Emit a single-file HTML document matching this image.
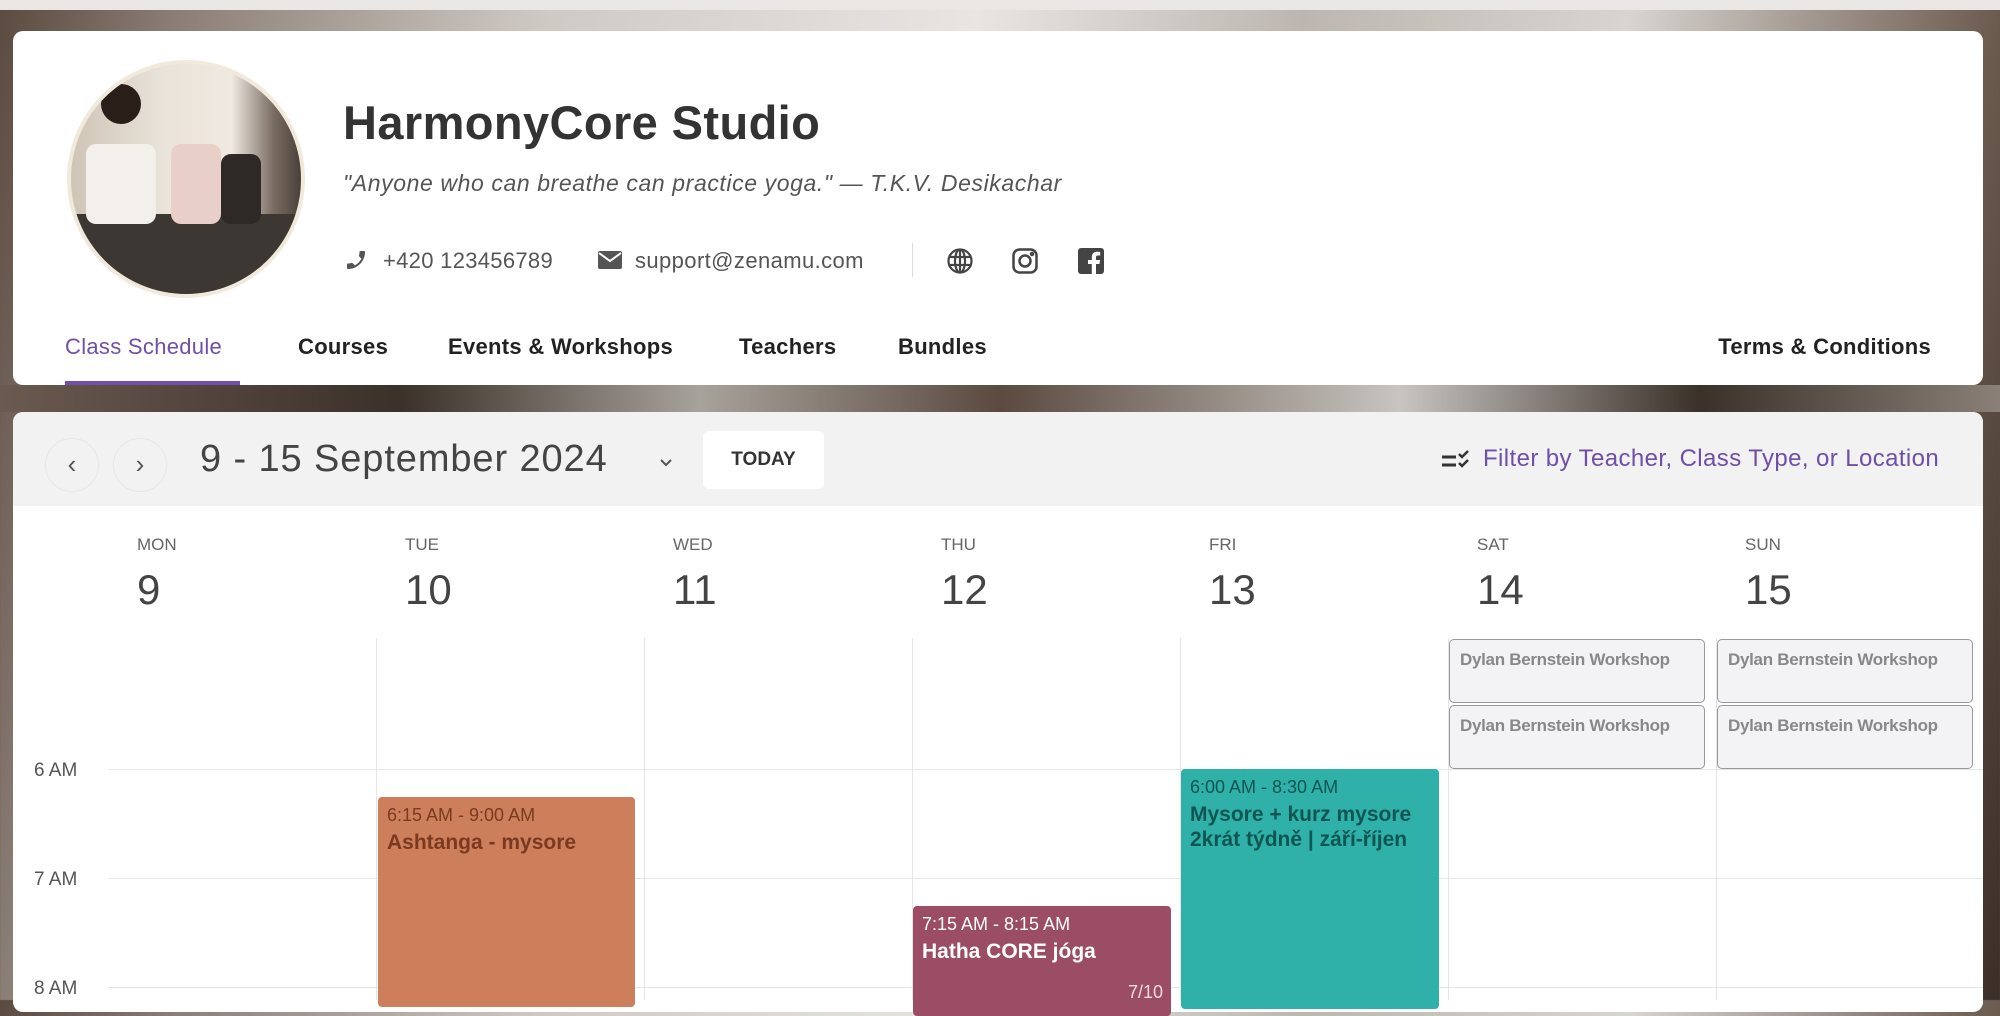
<!DOCTYPE html>
<html><head><meta charset="utf-8"><style>
*{box-sizing:border-box;margin:0;padding:0}
body{width:2000px;height:1000px;overflow:hidden;font-family:"Liberation Sans",sans-serif;position:relative;
background:linear-gradient(100deg,#5a4a40 0%,#8a7d74 8%,#cfc9c4 25%,#e8e5e2 45%,#bdb6b0 60%,#d8d4d0 75%,#6b5a4e 92%,#3a2e28 100%);}
.abs{position:absolute}
.card{position:absolute;background:#fff;border-radius:10px}
.nav{position:absolute;top:303px;font-size:22px;color:#222;font-weight:bold;letter-spacing:0.3px}
.dn{position:absolute;top:535px;font-size:17px;color:#666}
.dd{position:absolute;top:566px;font-size:42px;color:#444}
.vl{position:absolute;top:638px;width:1px;height:362px;background:#e6e6e6}
.hl{position:absolute;left:108px;width:1875px;height:1px;background:#e6e6e6}
.hr{position:absolute;left:34px;font-size:19px;color:#555}
.ws{position:absolute;width:256px;height:64px;background:#f3f3f6;border:1.5px solid #999;border-radius:5px;font-size:17px;font-weight:bold;color:#888;padding:10px 10px;white-space:nowrap;letter-spacing:-0.3px}
.ev{position:absolute;border-radius:4px;padding:8px 9px}
.ev .t{font-size:18px}
.ev .n{font-size:21px;font-weight:bold;margin-top:4px;line-height:25px}
</style></head><body>
<div class="abs" style="left:0;top:0;width:2000px;height:10px;background:#e9e6e3"></div>
<div class="abs" style="left:0;top:385px;width:2000px;height:27px;background:linear-gradient(90deg,#6a5a50,#3b302a 20%,#a8a29c 35%,#5a4a40 50%,#c8c4c0 70%,#3b302a 85%,#8a8078)"></div>

<div class="card" style="left:13px;top:31px;width:1970px;height:354px;overflow:hidden">
 <div class="abs" style="left:54px;top:29px;width:238px;height:238px;border-radius:50%;border:4px solid #f1e9dc;overflow:hidden;background:linear-gradient(90deg,#cfc5b6 0%,#e9e3da 40%,#efe9e1 70%,#7a6c62 88%,#4a403a 100%)">
  <div class="abs" style="left:0;top:150px;width:238px;height:90px;background:#3d3734"></div>
  <div class="abs" style="left:30px;top:20px;width:40px;height:40px;border-radius:50%;background:#2a1e18"></div>
  <div class="abs" style="left:15px;top:80px;width:70px;height:80px;border-radius:10px;background:#f3f0ec"></div>
  <div class="abs" style="left:100px;top:80px;width:50px;height:80px;border-radius:10px;background:#e8cfc8"></div>
  <div class="abs" style="left:150px;top:90px;width:40px;height:70px;border-radius:10px;background:#2e2826"></div>
 </div>
 <div class="abs" style="left:330px;top:64px;font-size:47px;font-weight:bold;color:#333;letter-spacing:0.4px">HarmonyCore Studio</div>
 <div class="abs" style="left:330px;top:139px;font-size:23px;font-style:italic;color:#555;letter-spacing:0.6px">"Anyone who can breathe can practice yoga." — T.K.V. Desikachar</div>
 <svg class="abs" style="left:331px;top:217px" width="24" height="24" viewBox="0 0 24 24"><path d="M20 15.5c-1.2 0-2.4-.2-3.6-.6-.3-.1-.7 0-1 .2l-2.2 2.2c-2.8-1.4-5.1-3.8-6.6-6.6l2.2-2.2c.3-.3.4-.7.2-1-.3-1.1-.5-2.3-.5-3.5 0-.6-.4-1-1-1H4c-.6 0-1 .4-1 1 0 9.4 7.6 17 17 17 .6 0 1-.4 1-1v-3.5c0-.6-.4-1-1-1z" fill="#555" transform="scale(-1,1) translate(-24,0)"/></svg>
 <div class="abs" style="left:370px;top:217px;font-size:22px;color:#555;letter-spacing:0.3px">+420 123456789</div>
 <svg class="abs" style="left:584px;top:218px" width="26" height="22" viewBox="0 0 26 22"><rect x="1" y="2" width="24" height="18" rx="2" fill="#555"/><path d="M2 4l11 8 11-8" stroke="#fff" stroke-width="2" fill="none"/></svg>
 <div class="abs" style="left:622px;top:217px;font-size:22px;color:#555;letter-spacing:0.4px">support@zenamu.com</div>
 <div class="abs" style="left:899px;top:212px;width:1px;height:34px;background:#ddd"></div>
 <svg class="abs" style="left:933px;top:216px" width="28" height="28" viewBox="0 0 28 28" fill="none" stroke="#444" stroke-width="2.2"><circle cx="14" cy="14" r="11.5"/><ellipse cx="14" cy="14" rx="5" ry="11.5"/><path d="M3 10h22M3 18h22M14 2.5v23"/></svg>
 <svg class="abs" style="left:998px;top:216px" width="28" height="28" viewBox="0 0 28 28" fill="none" stroke="#444" stroke-width="2.5"><rect x="2.5" y="2.5" width="23" height="23" rx="6"/><circle cx="14" cy="14" r="5.5"/><circle cx="21" cy="7" r="1" fill="#444"/></svg>
 <svg class="abs" style="left:1065px;top:217px" width="26" height="26" viewBox="0 0 26 26"><rect x="0" y="0" width="26" height="26" rx="3" fill="#444"/><path d="M18 26V16h3.5l.5-4h-4V9.5c0-1.2.4-2 2-2h2.2V4c-.4 0-1.7-.2-3.2-.2-3.2 0-5.2 2-5.2 5.5V12H10v4h3.8v10z" fill="#fff"/></svg>
 <div class="nav" style="left:52px;color:#6f4fa8;font-weight:normal">Class Schedule</div>
 <div class="abs" style="left:52px;top:350px;width:175px;height:4px;background:#6f4fa8"></div>
 <div class="nav" style="left:285px">Courses</div>
 <div class="nav" style="left:435px">Events &amp; Workshops</div>
 <div class="nav" style="left:726px">Teachers</div>
 <div class="nav" style="left:885px">Bundles</div>
 <div class="nav" style="right:52px">Terms &amp; Conditions</div>
</div>

<div class="card" style="left:13px;top:412px;width:1970px;height:600px;overflow:hidden">
 <div class="abs" style="left:0;top:0;width:1970px;height:94px;background:#f2f2f2"></div>
 <div class="abs" style="left:32px;top:26px;width:54px;height:54px;border-radius:50%;border:1px solid #e6e6e6;font-size:26px;color:#555;text-align:center;line-height:50px">‹</div>
 <div class="abs" style="left:100px;top:26px;width:54px;height:54px;border-radius:50%;border:1px solid #e6e6e6;font-size:26px;color:#555;text-align:center;line-height:50px">›</div>
 <div class="abs" style="left:187px;top:26px;font-size:38px;color:#444;letter-spacing:0.9px">9 - 15 September 2024</div>
 <svg class="abs" style="left:645px;top:45px" width="16" height="12" viewBox="0 0 16 12"><path d="M3 3l5 5 5-5" stroke="#555" stroke-width="2" fill="none"/></svg>
 <div class="abs" style="left:690px;top:19px;width:121px;height:58px;background:#fff;border-radius:6px;font-size:19px;font-weight:bold;color:#333;text-align:center;line-height:58px">TODAY</div>
 <svg class="abs" style="left:1428px;top:38px" width="30" height="22" viewBox="0 0 30 22"><path d="M1 7h14M1 15h14" stroke="#333" stroke-width="3"/><path d="M18 4l3 3 6-6M18 13l3 3 6-6" stroke="#333" stroke-width="2.5" fill="none"/></svg>
 <div class="abs" style="left:1470px;top:33px;font-size:24px;color:#6f4fa8;letter-spacing:0.4px">Filter by Teacher, Class Type, or Location</div>
</div>

<div class="dn" style="left:137px">MON</div><div class="dd" style="left:137px">9</div>
<div class="dn" style="left:405px">TUE</div><div class="dd" style="left:405px">10</div>
<div class="dn" style="left:673px">WED</div><div class="dd" style="left:673px">11</div>
<div class="dn" style="left:941px">THU</div><div class="dd" style="left:941px">12</div>
<div class="dn" style="left:1209px">FRI</div><div class="dd" style="left:1209px">13</div>
<div class="dn" style="left:1477px">SAT</div><div class="dd" style="left:1477px">14</div>
<div class="dn" style="left:1745px">SUN</div><div class="dd" style="left:1745px">15</div>

<div class="vl" style="left:376px"></div><div class="vl" style="left:644px"></div><div class="vl" style="left:912px"></div><div class="vl" style="left:1180px"></div><div class="vl" style="left:1448px"></div><div class="vl" style="left:1716px"></div>
<div class="hl" style="top:769px"></div><div class="hl" style="top:878px"></div><div class="hl" style="top:987px"></div>
<div class="hr" style="top:760px">6 AM</div><div class="hr" style="top:869px">7 AM</div><div class="hr" style="top:978px">8 AM</div>

<div class="ws" style="left:1449px;top:639px">Dylan Bernstein Workshop</div>
<div class="ws" style="left:1449px;top:705px">Dylan Bernstein Workshop</div>
<div class="ws" style="left:1717px;top:639px">Dylan Bernstein Workshop</div>
<div class="ws" style="left:1717px;top:705px">Dylan Bernstein Workshop</div>

<div class="ev" style="left:378px;top:797px;width:257px;height:210px;background:#cd7f5c;color:#7a3a1f"><div class="t">6:15 AM - 9:00 AM</div><div class="n">Ashtanga - mysore</div></div>
<div class="ev" style="left:913px;top:906px;width:258px;height:110px;background:#9b4d65;color:#fff"><div class="t">7:15 AM - 8:15 AM</div><div class="n">Hatha CORE jóga</div><div class="abs" style="right:8px;top:76px;font-size:18px;color:#f0dce2">7/10</div></div>
<div class="ev" style="left:1181px;top:769px;width:258px;height:240px;background:#2fb0a8;color:#0f5652"><div class="t">6:00 AM - 8:30 AM</div><div class="n">Mysore + kurz mysore<br>2krát týdně | září-říjen</div></div>
</body></html>
